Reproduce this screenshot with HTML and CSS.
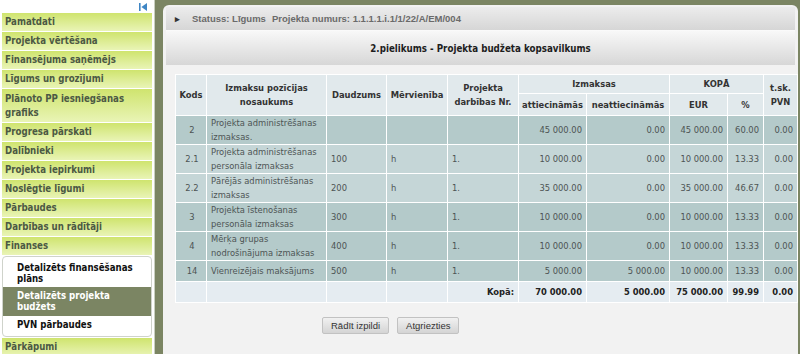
FILE: index.html
```html
<!DOCTYPE html>
<html lang="lv">
  <head>
    <meta charset="UTF-8" />
    <title>Projekta budžets</title>
    <link rel="stylesheet" href="styles.css">
  </head>
  <body>
    <div class="layout">
      <div class="menu">
        <div class="menu__top">
          <svg width="8" height="8" viewBox="0 0 8 8">
            <rect x="0" y="0" width="1.6" height="8" fill="#3f86c4" />
            <polygon points="8,0 8,8 2.4,4" fill="#3f86c4" />
          </svg>
        </div>
        <a class="menu__item">Pamatdati</a>
        <a class="menu__item">Projekta vērtēšana</a>
        <a class="menu__item">Finansējuma saņēmējs</a>
        <a class="menu__item">Līgums un grozījumi</a>
        <a class="menu__item menu__item--tall">Plānoto PP iesniegšanas grafiks</a>
        <a class="menu__item">Progresa pārskati</a>
        <a class="menu__item">Dalībnieki</a>
        <a class="menu__item">Projekta iepirkumi</a>
        <a class="menu__item">Noslēgtie līgumi</a>
        <a class="menu__item">Pārbaudes</a>
        <a class="menu__item">Darbības un rādītāji</a>
        <a class="menu__item">Finanses</a>
        <div class="submenu">
          <a class="submenu__item">Detalizēts finansēšanas plāns</a>
          <a class="submenu__item active">Detalizēts projekta budžets</a>
          <a class="submenu__item">PVN pārbaudes</a>
        </div>
        <a class="menu__item">Pārkāpumi</a>
      </div>

      <div class="panel">
        <div class="status">
          <span class="status__arrow">&#9656;</span>
          <span>Statuss: Līgums</span>
          <span>Projekta numurs: 1.1.1.1.i.1/1/22/A/EM/004</span>
        </div>
        <div class="title">2.pielikums - Projekta budžeta kopsavilkums</div>

        <div class="content">
          <table class="budget">
            <colgroup>
              <col style="width:31px" />
              <col style="width:120px" />
              <col style="width:60px" />
              <col style="width:61px" />
              <col style="width:71px" />
              <col style="width:68px" />
              <col style="width:83px" />
              <col style="width:58px" />
              <col style="width:36px" />
              <col style="width:34px" />
            </colgroup>
            <thead>
              <tr>
                <th rowspan="2">Kods</th>
                <th rowspan="2">Izmaksu pozīcijas nosaukums</th>
                <th rowspan="2">Daudzums</th>
                <th rowspan="2">Mērvienība</th>
                <th rowspan="2">Projekta darbības Nr.</th>
                <th colspan="2">Izmaksas</th>
                <th colspan="2">KOPĀ</th>
                <th rowspan="2">t.sk. PVN</th>
              </tr>
              <tr class="sub">
                <th>attiecināmās</th>
                <th>neattiecināmās</th>
                <th>EUR</th>
                <th>%</th>
              </tr>
            </thead>
            <tbody>
              <tr class="dark">
                <td class="c">2</td>
                <td>Projekta administrēšanas izmaksas.</td>
                <td></td>
                <td></td>
                <td></td>
                <td class="r">45 000.00</td>
                <td class="r">0.00</td>
                <td class="r">45 000.00</td>
                <td class="r">60.00</td>
                <td class="r">0.00</td>
              </tr>
              <tr class="light">
                <td class="c">2.1</td>
                <td>Projekta administrēšanas personāla izmaksas</td>
                <td>100</td>
                <td>h</td>
                <td>1.</td>
                <td class="r">10 000.00</td>
                <td class="r">0.00</td>
                <td class="r">10 000.00</td>
                <td class="r">13.33</td>
                <td class="r">0.00</td>
              </tr>
              <tr class="light">
                <td class="c">2.2</td>
                <td>Pārējās administrēšanas izmaksas</td>
                <td>200</td>
                <td>h</td>
                <td>1.</td>
                <td class="r">35 000.00</td>
                <td class="r">0.00</td>
                <td class="r">35 000.00</td>
                <td class="r">46.67</td>
                <td class="r">0.00</td>
              </tr>
              <tr class="dark">
                <td class="c">3</td>
                <td>Projekta īstenošanas personāla izmaksas</td>
                <td>300</td>
                <td>h</td>
                <td>1.</td>
                <td class="r">10 000.00</td>
                <td class="r">0.00</td>
                <td class="r">10 000.00</td>
                <td class="r">13.33</td>
                <td class="r">0.00</td>
              </tr>
              <tr class="dark">
                <td class="c">4</td>
                <td>Mērķa grupas nodrošinājuma izmaksas</td>
                <td>400</td>
                <td>h</td>
                <td>1.</td>
                <td class="r">10 000.00</td>
                <td class="r">0.00</td>
                <td class="r">10 000.00</td>
                <td class="r">13.33</td>
                <td class="r">0.00</td>
              </tr>
              <tr class="dark">
                <td class="c">14</td>
                <td>Vienreizējais maksājums</td>
                <td>500</td>
                <td>h</td>
                <td>1.</td>
                <td class="r">5 000.00</td>
                <td class="r">5 000.00</td>
                <td class="r">10 000.00</td>
                <td class="r">13.33</td>
                <td class="r">0.00</td>
              </tr>
              <tr class="total">
                <td></td>
                <td></td>
                <td></td>
                <td></td>
                <td class="r">Kopā:</td>
                <td class="r">70 000.00</td>
                <td class="r">5 000.00</td>
                <td class="r">75 000.00</td>
                <td class="r">99.99</td>
                <td class="r">0.00</td>
              </tr>
            </tbody>
          </table>

          <div class="buttons">
            <button class="btn">Rādīt izpildi</button>
            <button class="btn">Atgriezties</button>
          </div>
        </div>
      </div>
    </div>
  </body>
</html>
```

FILE: styles.css
```css
* {
  box-sizing: border-box;
}
body {
  margin: 0;
  background-color: #7b8563;
  font-family: "DejaVu Sans Condensed", "DejaVu Sans", sans-serif;
}
.layout {
  display: flex;
  align-items: flex-start;
  height: 354px;
  overflow: hidden;
}

/* left menu */
.menu {
  width: 155px;
  flex-shrink: 0;
  background-color: #fff;
  border-right: 1px solid #c9cfc0;
  padding: 0 2px;
  display: flex;
  flex-direction: column;
  gap: 1px;
}
.menu__top {
  height: 12px;
  display: flex;
  justify-content: flex-end;
  align-items: center;
  padding-right: 5px;
  padding-top: 2px;
}
.menu__item {
  display: flex;
  align-items: center;
  height: 18px;
  padding: 0 3px;
  background: linear-gradient(to bottom, #cfe46e, #e9f4b6);
  color: #4c5944;
  font-weight: bold;
  font-size: 9.6px;
  line-height: 14px;
  cursor: pointer;
}
.menu__item--tall {
  height: 33px;
}
.submenu {
  border: 1px solid #cfd3cb;
  border-radius: 4px;
  padding: 2px 0 3px;
  display: flex;
  flex-direction: column;
}
.submenu__item {
  padding: 3px 8px 3px 14px;
  font-weight: bold;
  font-size: 9.6px;
  line-height: 11px;
  color: #111;
  cursor: pointer;
}
.submenu__item.active {
  background-color: #7b8563;
  color: #fff;
  padding-bottom: 4px;
}

/* main panel */
.panel {
  margin: 5px 0 0 8px;
  width: 635px;
  height: 360px;
  background-color: #f2f2f2;
  border-radius: 6px 6px 0 0;
  padding: 2px 3px 0;
}
.status {
  height: 23px;
  display: flex;
  align-items: center;
  gap: 6px;
  padding-left: 9px;
  background: linear-gradient(to bottom, #ececec, #d6d6d6);
  font-family: "Liberation Sans", Arial, sans-serif;
  font-weight: bold;
  font-size: 9.5px;
  color: #6a6a6a;
}
.status__arrow {
  font-size: 9px;
  color: #333;
  margin-right: 6px;
}
.title {
  height: 35px;
  display: flex;
  align-items: center;
  justify-content: center;
  background: linear-gradient(to bottom, #f8f8f8, #d7d7d7);
  font-weight: bold;
  font-size: 9.7px;
  color: #1e1e1e;
  border-top: 1px solid #fafafa;
}
.content {
  padding: 9px 0 0 9px;
}

.budget {
  width: 622px;
  table-layout: fixed;
  border-collapse: collapse;
  font-size: 9.3px;
  line-height: 14px;
}
.budget th,
.budget td {
  border: 1px solid #fff;
}
.budget th {
  background-color: #e1e9ec;
  color: #333;
  font-weight: bold;
  height: 19px;
  padding: 0 1px;
  text-align: center;
}
.budget tr.sub th {
  height: 22px;
}
.budget td {
  height: 21px;
  padding: 0 2px 0 4px;
  color: #4d5454;
}
.budget .c {
  text-align: center;
}
.budget .r {
  text-align: right;
  white-space: nowrap;
  padding-right: 4px;
}
.budget tr.dark td {
  background-color: #b4caca;
}
.budget tr.light td {
  background-color: #c5d6d7;
}
.budget tr.total td {
  background-color: #e5ecf1;
  color: #222;
  font-weight: bold;
}

.buttons {
  display: flex;
  gap: 8px;
  padding: 14px 0 0 147px;
}
.btn {
  height: 17px;
  padding: 0 8px;
  border: 1px solid #c2c2c2;
  border-radius: 2px;
  background: linear-gradient(to bottom, #f1f1f1, #d4d4d4);
  font-family: "Liberation Sans", Arial, sans-serif;
  font-size: 9.5px;
  color: #333;
  cursor: pointer;
}
```
